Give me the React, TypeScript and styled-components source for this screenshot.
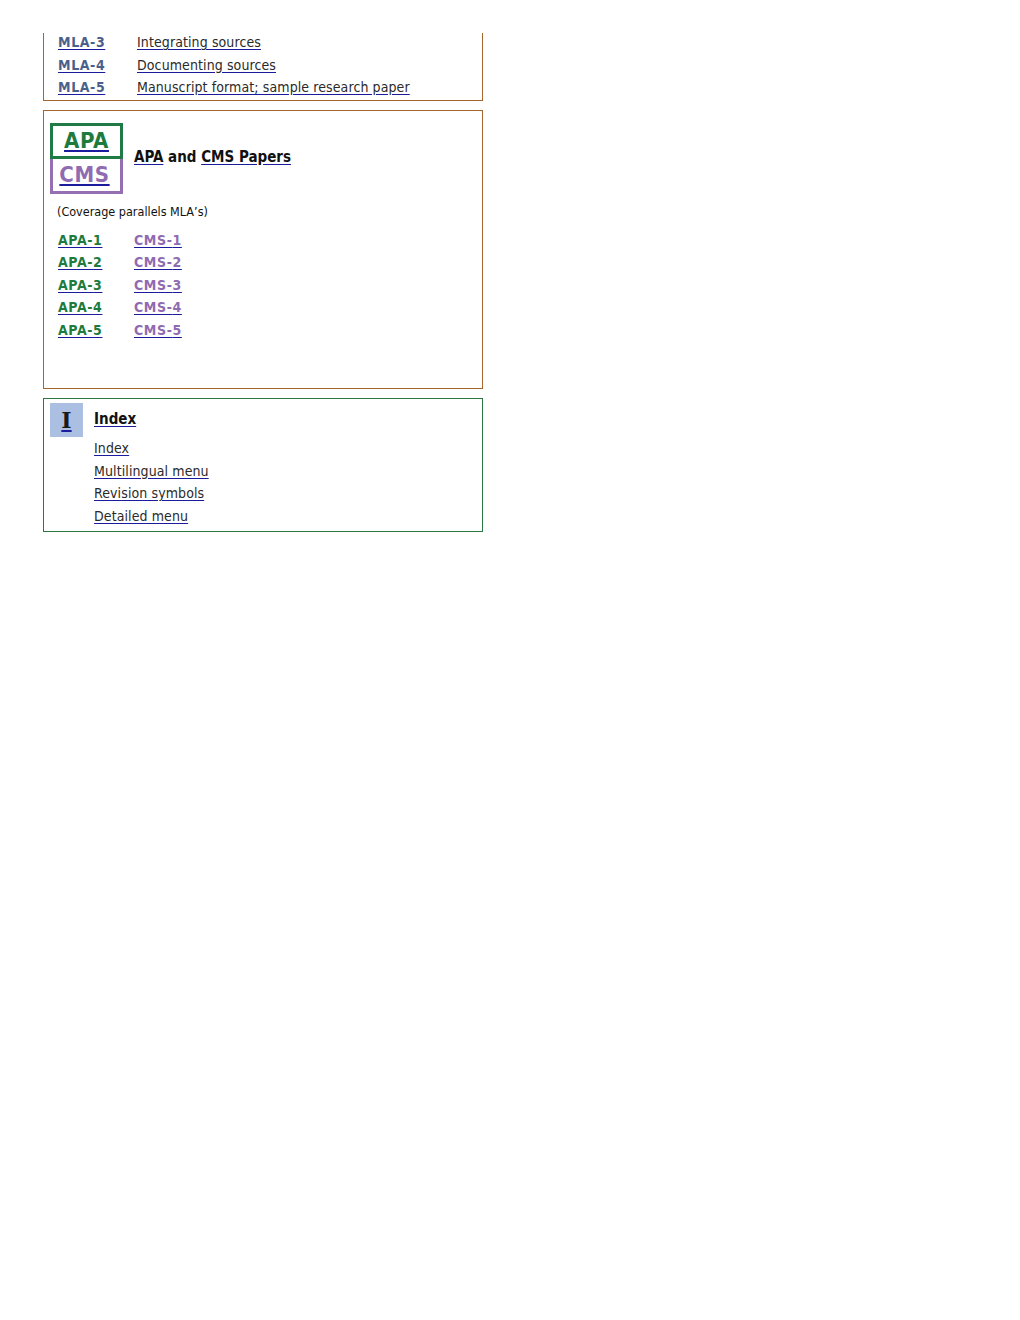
import { createGlobalStyle, styled } from "styled-components";

const GlobalStyle = createGlobalStyle`
  html, body {
    margin: 0;
    padding: 0;
    background: #fff;
  }
  body {
    font-family: "DejaVu Sans Condensed", "DejaVu Sans", sans-serif;
    color: #222;
  }
`;

const mlaRows = [
  { code: "MLA-3", title: "Integrating sources" },
  { code: "MLA-4", title: "Documenting sources" },
  { code: "MLA-5", title: "Manuscript format; sample research paper" },
];

const apaCms = [1, 2, 3, 4, 5];

const indexLinks = ["Index", "Multilingual menu", "Revision symbols", "Detailed menu"];

const App = () => {
  return (
    <>
      <GlobalStyle />
      <Page>
        <Panel tone="brown" cut>
          <LinkTable>
            {mlaRows.map((row) => (
              <TableRow key={row.code}>
                <CodeLink href="#" tone="mla">
                  {row.code}
                </CodeLink>
                <TextLink href="#">{row.title}</TextLink>
              </TableRow>
            ))}
          </LinkTable>
        </Panel>

        <Panel tone="brown">
          <PaperHead>
            <Badges>
              <Badge tone="apa">
                <BadgeLink href="#">APA</BadgeLink>
              </Badge>
              <Badge tone="cms">
                <BadgeLink href="#">CMS</BadgeLink>
              </Badge>
            </Badges>
            <Heading>
              <HeadLink href="#">APA</HeadLink> and{" "}
              <HeadLink href="#">CMS Papers</HeadLink>
            </Heading>
          </PaperHead>
          <Note>(Coverage parallels MLA’s)</Note>
          <PaperTable>
            {apaCms.map((n) => (
              <TableRow key={n} narrow>
                <CodeLink href="#" tone="apa">
                  APA-{n}
                </CodeLink>
                <CodeLink href="#" tone="cms">
                  CMS-{n}
                </CodeLink>
              </TableRow>
            ))}
          </PaperTable>
        </Panel>

        <Panel tone="green">
          <IndexGrid>
            <IndexMark>
              <MarkLink href="#">I</MarkLink>
            </IndexMark>
            <Heading>
              <HeadLink href="#">Index</HeadLink>
            </Heading>
            <IndexList>
              {indexLinks.map((label) => (
                <IndexItem key={label}>
                  <TextLink href="#">{label}</TextLink>
                </IndexItem>
              ))}
            </IndexList>
          </IndexGrid>
        </Panel>
      </Page>
    </>
  );
};

export default App;

const borders: Record<string, string> = {
  brown: "#a5672e",
  green: "#2d7744",
};

const linkColors: Record<string, string> = {
  mla: "#4c5f8b",
  apa: "#1e7b3e",
  cms: "#8f6bb1",
};

const Page = styled.div`
  display: flex;
  flex-direction: column;
  gap: 9px;

  width: 440px;
  margin-left: 43px;
  padding-top: 33px;
`;

const Panel = styled.div<{ tone: string; cut?: boolean }>`
  box-sizing: border-box;
  width: 440px;

  border: 1px solid ${({ tone }) => borders[tone]};
  border-top-width: ${({ cut }) => (cut ? "0" : "1px")};
`;

// the panel is scrolled past its top; its first rows sit just above the fold
const LinkTable = styled.div`
  display: flex;
  flex-direction: column;
  margin-top: -2px;
  padding: 0 0 1px 14px;
`;

const TableRow = styled.div<{ narrow?: boolean }>`
  display: grid;
  grid-template-columns: ${({ narrow }) => (narrow ? "76px" : "79px")} 1fr;
  align-items: center;
  height: 22.5px;
`;

const underline = `
  text-decoration: underline;
  text-decoration-color: #1b1b9e;
  text-underline-offset: 2px;
`;

const CodeLink = styled.a<{ tone: string }>`
  font-size: 14px;
  font-weight: bold;
  letter-spacing: 0.6px;
  color: ${({ tone }) => linkColors[tone]};
  ${underline};
`;

const TextLink = styled.a`
  font-size: 14px;
  letter-spacing: 0.1px;
  color: #2a2a2a;
  ${underline};
`;

const PaperHead = styled.div`
  display: flex;
  align-items: center;
  gap: 11px;

  padding: 12px 0 0 6px;
`;

const Badges = styled.div`
  display: flex;
  flex-direction: column;
  width: 73px;
`;

const Badge = styled.div<{ tone: string }>`
  box-sizing: border-box;
  display: flex;
  justify-content: center;
  align-items: center;

  height: ${({ tone }) => (tone === "apa" ? "36px" : "35px")};
  padding-right: ${({ tone }) => (tone === "cms" ? "4px" : "0")};

  border: 3px solid ${({ tone }) => (tone === "apa" ? "#1f7a45" : "#9470b2")};
  border-top-width: ${({ tone }) => (tone === "apa" ? "3px" : "0")};
  color: ${({ tone }) => linkColors[tone]};
`;

const BadgeLink = styled.a`
  font-size: 22px;
  font-weight: bold;
  letter-spacing: 0.6px;
  color: inherit;
  ${underline};
`;

const Heading = styled.div`
  margin-bottom: 3px;
  font-size: 15px;
  font-weight: bold;
  color: #111;
`;

const HeadLink = styled.a`
  color: #111;
  ${underline};
`;

const Note = styled.div`
  margin: 10px 0 0 13px;
  font-size: 12.5px;
  line-height: 16px;
  color: #111;
`;

const PaperTable = styled.div`
  display: flex;
  flex-direction: column;
  padding: 9px 0 47px 14px;
`;

const IndexGrid = styled.div`
  display: grid;
  grid-template-columns: 33px 1fr;
  column-gap: 11px;
  align-items: center;

  padding: 4px 0 4px 6px;
`;

const IndexMark = styled.div`
  display: flex;
  justify-content: center;
  align-items: center;

  height: 34px;
  background-color: #abbfe2;
`;

const MarkLink = styled.a`
  font-family: "DejaVu Serif", serif;
  font-size: 22px;
  font-weight: bold;
  color: #1a1a1a;
  ${underline};
`;

const IndexList = styled.div`
  grid-column: 2;
  display: flex;
  flex-direction: column;
`;

const IndexItem = styled.div`
  display: flex;
  align-items: center;
  height: 22.5px;
`;
